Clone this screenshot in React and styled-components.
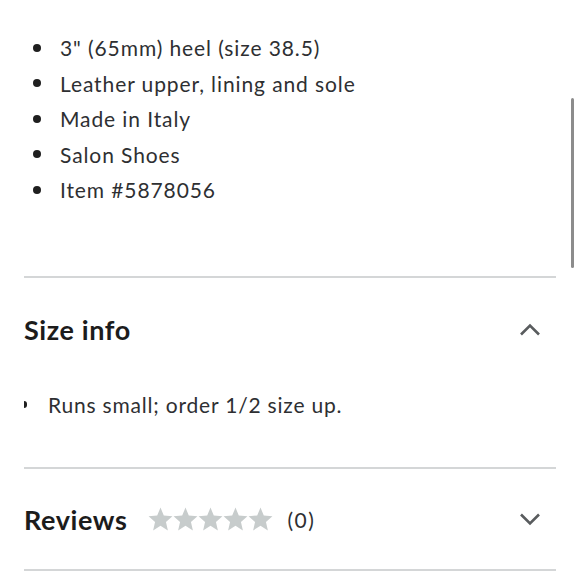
import React from 'react';
import styled, { createGlobalStyle } from 'styled-components';

const GlobalStyle = createGlobalStyle`
  html, body {
    margin: 0;
    padding: 0;
    background: #fff;
  }
  body {
    font-family: Lato, 'Noto Sans', sans-serif;
    color: #2e2f32;
  }
`;

const features = [
  '3" (65mm) heel (size 38.5)',
  'Leather upper, lining and sole',
  'Made in Italy',
  'Salon Shoes',
  'Item #5878056',
];

const Page = styled.div`
  position: relative;
  width: 580px;
  height: 580px;
  overflow: hidden;
  padding: 0 24px;
  box-sizing: border-box;
`;

const Scrollbar = styled.div`
  position: absolute;
  right: 6px;
  top: 98px;
  width: 3px;
  height: 170px;
  border-radius: 2px;
  background: #8c8c8c;
`;

const FeatureList = styled.ul`
  list-style: none;
  margin: 0;
  padding: 30px 0 0;
  height: 276px;
  box-sizing: border-box;
`;

const Feature = styled.li`
  display: flex;
  align-items: center;
  height: 35.5px;
  font-size: 21px;
  letter-spacing: 0.9px;

  &::before {
    content: '';
    width: 8px;
    height: 8px;
    border-radius: 50%;
    background: #1f1f1f;
    margin: 0 19px 0 9px;
    flex: none;
  }
`;

const Divider = styled.hr`
  margin: 0;
  border: 0;
  height: 2px;
  background: #d4d6d7;
`;

const SectionHeader = styled.div`
  display: flex;
  align-items: center;
  height: ${p => p.h}px;
`;

const Title = styled.h2`
  margin: 0;
  font-size: 27px;
  font-weight: 700;
  color: #1c1c1c;
  letter-spacing: 0.6px;
`;

const Chevron = styled.svg`
  margin-left: auto;
  margin-right: 15px;
`;

const SizeNote = styled.div`
  display: flex;
  align-items: center;
  height: 36px;
  margin: 6px 0 45px;
  font-size: 21px;
  letter-spacing: 0.8px;
`;

const HalfDot = styled.span`
  width: 3px;
  height: 7px;
  border-radius: 0 4px 4px 0;
  background: #1f1f1f;
  margin-right: 21px;
`;

const Stars = styled.div`
  display: flex;
  margin-left: 21px;
`;

const Count = styled.span`
  margin-left: 14px;
  font-size: 21px;
  letter-spacing: 1.5px;
  color: #2e2f32;
`;

const Star = () => (
  <svg width="25" height="25" viewBox="1 1 22 22">
    <polygon
      points="12,1.5 14.9,8.4 22.5,9.1 16.8,14.1 18.5,21.6 12,17.6 5.5,21.6 7.2,14.1 1.5,9.1 9.1,8.4"
      fill="#c7cccc"
    />
  </svg>
);

const ChevronIcon = ({ up }) => (
  <Chevron width="22" height="13" viewBox="0 0 22 13">
    <polyline
      points={up ? '2,11.5 11,2.5 20,11.5' : '2,1.5 11,10.5 20,1.5'}
      fill="none"
      stroke="#595c5e"
      strokeWidth="2.6"
    />
  </Chevron>
);

const App = () => (
  <Page>
    <GlobalStyle />
    <Scrollbar />
    <FeatureList>
      {features.map(f => (
        <Feature key={f}>{f}</Feature>
      ))}
    </FeatureList>
    <Divider />
    <SectionHeader h={102}>
      <Title>Size info</Title>
      <ChevronIcon up />
    </SectionHeader>
    <SizeNote>
      <HalfDot />
      Runs small; order 1/2 size up.
    </SizeNote>
    <Divider />
    <SectionHeader h={100}>
      <Title>Reviews</Title>
      <Stars>
        {[0, 1, 2, 3, 4].map(i => (
          <Star key={i} />
        ))}
      </Stars>
      <Count>(0)</Count>
      <ChevronIcon />
    </SectionHeader>
    <Divider />
  </Page>
);

export default App;
